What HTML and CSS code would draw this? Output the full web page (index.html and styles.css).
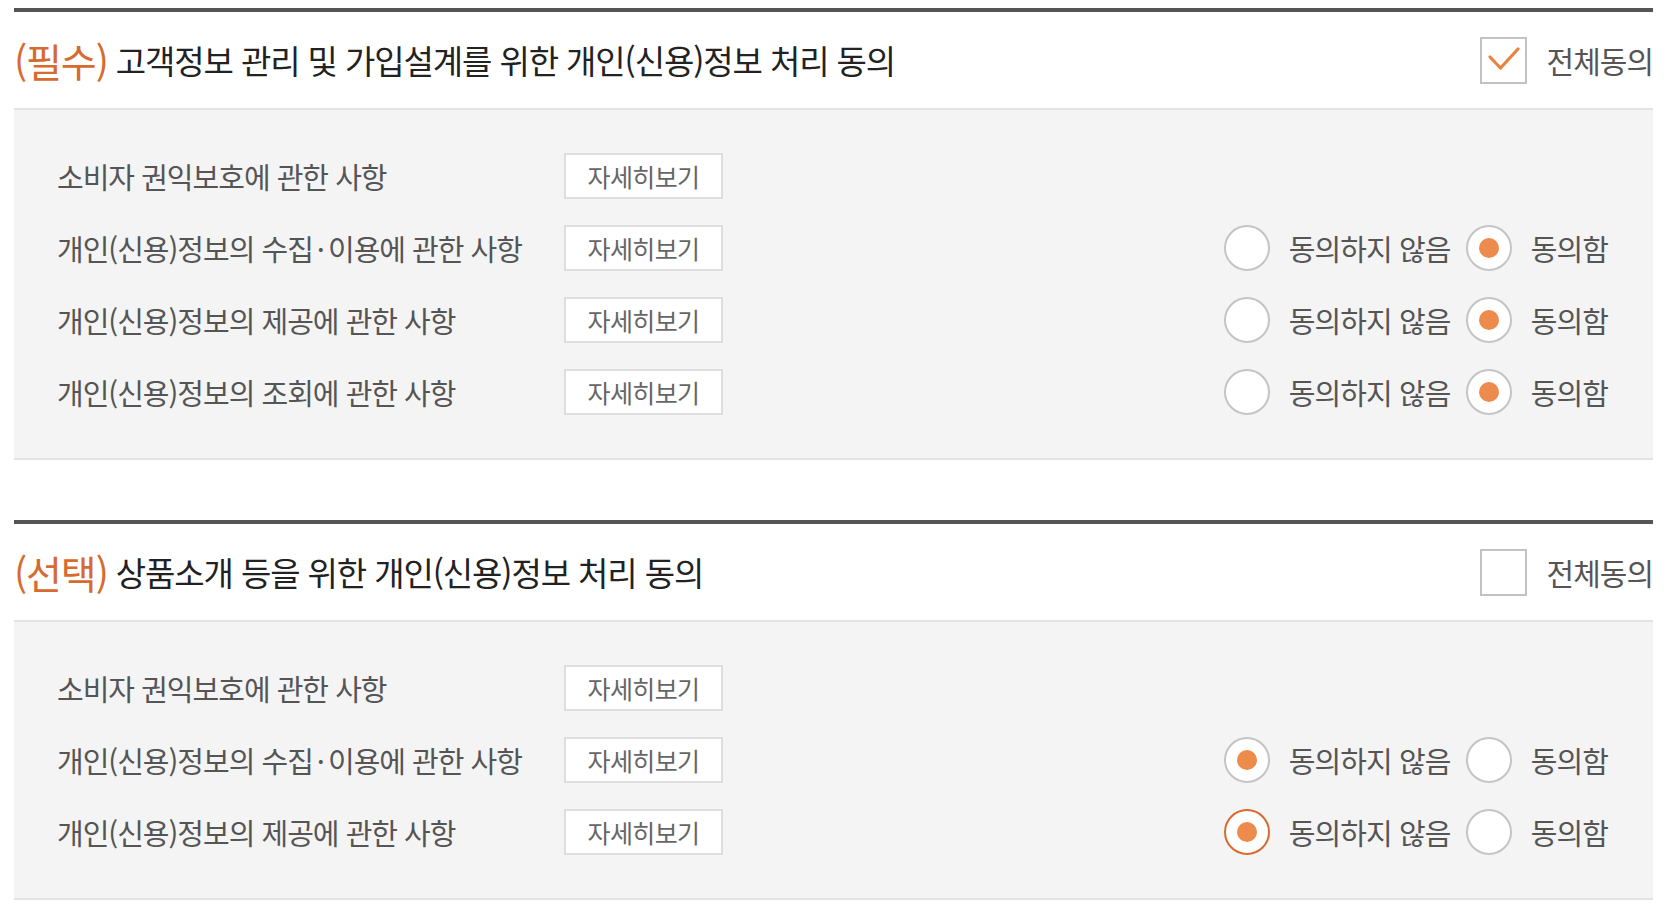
FILE: index.html
```html
<!DOCTYPE html>
<html lang="ko">
<head>
<meta charset="utf-8">
<title>개인(신용)정보 처리 동의</title>
<link rel="stylesheet" href="styles.css">
</head>
<body>
<div class="wrap">
  <section class="section">
    <div class="section-head">
      <h2 class="title"><span class="tag">(필수)</span>고객정보 관리 및 가입설계를 위한 개인(신용)정보 처리 동의</h2>
      <label class="all">
        <span class="checkbox is-checked">
          <svg width="47" height="47" viewBox="0 0 47 47"><polyline points="10,20 20.5,31 38,12" fill="none" stroke="#e8823f" stroke-width="3.2" stroke-linecap="round" stroke-linejoin="round"/></svg>
        </span>
        <span class="all-text">전체동의</span>
      </label>
    </div>
    <div class="section-body">
      <div class="row">
        <span class="row-label">소비자 권익보호에 관한 사항</span>
        <span class="btn">자세히보기</span>
      </div>
      <div class="row">
        <span class="row-label">개인(신용)정보의 수집<span class="dot">·</span>이용에 관한 사항</span>
        <span class="btn">자세히보기</span>
        <div class="choices">
          <span class="radio"></span><span class="choice-text">동의하지 않음</span>
          <span class="radio is-checked"></span><span class="choice-text">동의함</span>
        </div>
      </div>
      <div class="row">
        <span class="row-label">개인(신용)정보의 제공에 관한 사항</span>
        <span class="btn">자세히보기</span>
        <div class="choices">
          <span class="radio"></span><span class="choice-text">동의하지 않음</span>
          <span class="radio is-checked"></span><span class="choice-text">동의함</span>
        </div>
      </div>
      <div class="row">
        <span class="row-label">개인(신용)정보의 조회에 관한 사항</span>
        <span class="btn">자세히보기</span>
        <div class="choices">
          <span class="radio"></span><span class="choice-text">동의하지 않음</span>
          <span class="radio is-checked"></span><span class="choice-text">동의함</span>
        </div>
      </div>
    </div>
  </section>

  <section class="section">
    <div class="section-head">
      <h2 class="title"><span class="tag">(선택)</span>상품소개 등을 위한 개인(신용)정보 처리 동의</h2>
      <label class="all">
        <span class="checkbox"></span>
        <span class="all-text">전체동의</span>
      </label>
    </div>
    <div class="section-body">
      <div class="row">
        <span class="row-label">소비자 권익보호에 관한 사항</span>
        <span class="btn">자세히보기</span>
      </div>
      <div class="row">
        <span class="row-label">개인(신용)정보의 수집<span class="dot">·</span>이용에 관한 사항</span>
        <span class="btn">자세히보기</span>
        <div class="choices">
          <span class="radio is-checked"></span><span class="choice-text">동의하지 않음</span>
          <span class="radio"></span><span class="choice-text">동의함</span>
        </div>
      </div>
      <div class="row">
        <span class="row-label">개인(신용)정보의 제공에 관한 사항</span>
        <span class="btn">자세히보기</span>
        <div class="choices">
          <span class="radio is-checked is-focus"></span><span class="choice-text">동의하지 않음</span>
          <span class="radio"></span><span class="choice-text">동의함</span>
        </div>
      </div>
    </div>
  </section>
</div>
</body>
</html>
```

FILE: styles.css
```css
* { box-sizing: border-box; }

body {
  margin: 0;
  background: #fff;
  font-family: "Noto Sans CJK KR", "Noto Sans", sans-serif;
  color: #555;
}

.wrap {
  padding: 8px 25px 0 14px;
}

.section {
  border-top: 4px solid #555;
}

.section + .section {
  margin-top: 60px;
}

.section-head {
  height: 96px;
  display: flex;
  align-items: center;
  justify-content: space-between;
}

.title {
  margin: 0;
  font-size: 33px;
  font-weight: 400;
  color: #222;
  letter-spacing: -1.1px;
  display: flex;
  align-items: center;
  white-space: nowrap;
}

.tag {
  font-size: 39px;
  color: #d76a2f;
  letter-spacing: -1.1px;
  margin-right: 8px;
}

.all {
  display: flex;
  align-items: center;
  gap: 20px;
}

.checkbox {
  width: 47px;
  height: 47px;
  border: 2px solid #c2c2c2;
  background: #fff;
  display: block;
  position: relative;
}

.checkbox svg {
  position: absolute;
  left: -2px;
  top: -2px;
}

.all-text {
  font-size: 30px;
  color: #555;
  letter-spacing: -1px;
}

.section-body {
  background: #f4f4f4;
  border-top: 2px solid #e4e4e4;
  border-bottom: 2px solid #e4e4e4;
  padding: 30px 45px 30px 43px;
}

.row {
  height: 72px;
  display: flex;
  align-items: center;
}

.row-label {
  width: 507px;
  font-size: 29px;
  color: #555;
  letter-spacing: -1px;
  white-space: nowrap;
}

.dot {
  margin: 0 4px;
}

.btn {
  width: 159px;
  height: 46px;
  border: 2px solid #dedede;
  background: #fff;
  display: flex;
  align-items: center;
  justify-content: center;
  font-size: 25px;
  color: #666;
  letter-spacing: -0.6px;
}

.choices {
  margin-left: auto;
  display: flex;
  align-items: center;
}

.radio {
  width: 46px;
  height: 46px;
  border-radius: 50%;
  border: 2px solid #c4c4c4;
  background: #fff;
  display: flex;
  align-items: center;
  justify-content: center;
}

.radio.is-checked::after {
  content: "";
  width: 20px;
  height: 20px;
  border-radius: 50%;
  background: #ec8b4b;
}

.radio.is-focus {
  border-color: #d9692f;
}

.choice-text {
  font-size: 29px;
  color: #555;
  letter-spacing: -0.9px;
  margin-left: 19px;
  margin-right: 15px;
}

.choice-text:last-child {
  margin-right: 0;
}
```
